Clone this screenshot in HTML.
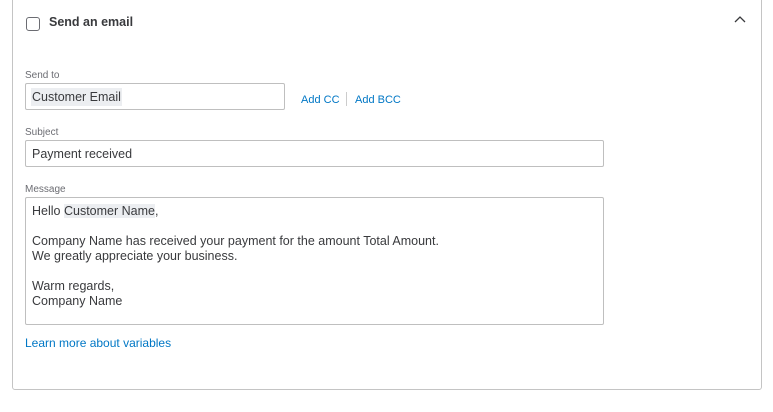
<!DOCTYPE html><html><head><style>
body{margin:0;width:773px;height:412px;background:#fff;font-family:"Liberation Sans",sans-serif;position:relative;overflow:hidden;color:#393a3d}
.a{position:absolute}
.box{left:12px;top:-5px;width:748px;height:393px;border:1px solid #c4c4c4;border-radius:3px}
.lbl{font-size:10px;color:#6b6c72}
.inp{border:1px solid #bfbfbf;border-radius:2px;box-sizing:border-box;font-size:12.5px;color:#393a3d}
.hl{background:#eceef1}
.lk{color:#0077c5;font-size:11px}
</style></head><body>
<div class="a box"></div>
<div class="a" style="left:26px;top:17px;width:12px;height:12px;border:1.5px solid #6b6c72;border-radius:3px"></div>
<div class="a" style="left:49px;top:15px;font-size:12.5px;font-weight:bold;color:#393a3d">Send an email</div>
<svg class="a" style="left:733px;top:14px" width="14" height="10"><path d="M2 8 L7 3 L12 8" stroke="#393a3d" stroke-width="1.3" fill="none"/></svg>
<div class="a lbl" style="left:25px;top:70px">Send to</div>
<div class="a inp" style="left:25px;top:83px;width:260px;height:27px"><span class="hl" style="position:absolute;left:5px;top:4px;padding:2px 1px">Customer Email</span></div>
<div class="a lk" style="left:301px;top:94px">Add CC</div>
<div class="a" style="left:346px;top:92px;width:1px;height:14px;background:#ccc"></div>
<div class="a lk" style="left:355px;top:94px">Add BCC</div>
<div class="a lbl" style="left:25px;top:127px">Subject</div>
<div class="a inp" style="left:25px;top:140px;width:579px;height:27px"><span style="position:absolute;left:6px;top:6px">Payment received</span></div>
<div class="a lbl" style="left:25px;top:184px">Message</div>
<div class="a inp" style="left:25px;top:197px;width:579px;height:128px"><div style="position:absolute;left:6px;top:6px;line-height:15px">Hello <span class="hl">Customer Name</span>,<br><br>Company Name has received your payment for the amount Total Amount.<br>We greatly appreciate your business.<br><br>Warm regards,<br>Company Name</div></div>
<div class="a lk" style="left:25px;top:336px;font-size:12px">Learn more about variables</div>
</body></html>
